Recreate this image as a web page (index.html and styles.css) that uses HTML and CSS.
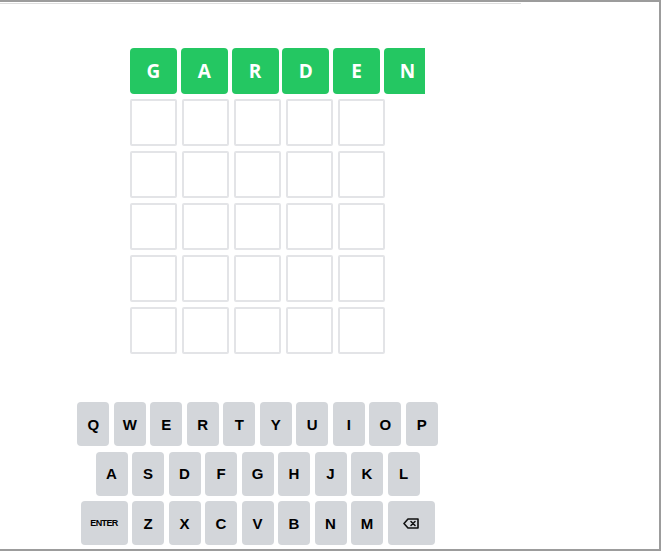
FILE: index.html
```html
<!DOCTYPE html>
<html lang="en">
<head>
<meta charset="utf-8">
<title>Word Game</title>
<link rel="stylesheet" href="styles.css">
</head>
<body>
<div class="frame">
  <div class="progress"></div>
  <main class="app">
    <section class="board">
      <div class="row row-guess">
        <div class="tile tile-correct">G</div>
        <div class="tile tile-correct">A</div>
        <div class="tile tile-correct">R</div>
        <div class="tile tile-correct">D</div>
        <div class="tile tile-correct">E</div>
        <div class="tile tile-correct">N</div>
      </div>
      <div class="row"><div class="tile"></div><div class="tile"></div><div class="tile"></div><div class="tile"></div><div class="tile"></div></div>
      <div class="row"><div class="tile"></div><div class="tile"></div><div class="tile"></div><div class="tile"></div><div class="tile"></div></div>
      <div class="row"><div class="tile"></div><div class="tile"></div><div class="tile"></div><div class="tile"></div><div class="tile"></div></div>
      <div class="row"><div class="tile"></div><div class="tile"></div><div class="tile"></div><div class="tile"></div><div class="tile"></div></div>
      <div class="row"><div class="tile"></div><div class="tile"></div><div class="tile"></div><div class="tile"></div><div class="tile"></div></div>
    </section>
    <section class="keyboard">
      <div class="krow">
        <button class="key">Q</button><button class="key">W</button><button class="key">E</button><button class="key">R</button><button class="key">T</button><button class="key">Y</button><button class="key">U</button><button class="key">I</button><button class="key">O</button><button class="key">P</button>
      </div>
      <div class="krow">
        <button class="key">A</button><button class="key">S</button><button class="key">D</button><button class="key">F</button><button class="key">G</button><button class="key">H</button><button class="key">J</button><button class="key">K</button><button class="key">L</button>
      </div>
      <div class="krow">
        <button class="key key-wide key-enter">ENTER</button><button class="key">Z</button><button class="key">X</button><button class="key">C</button><button class="key">V</button><button class="key">B</button><button class="key">N</button><button class="key">M</button><button class="key key-wide" aria-label="Backspace"><svg class="bs" width="16" height="11" viewBox="0 0 16 11"><path d="M5 1 H15 V10 H5 L1 5.5 Z" fill="none" stroke="#111" stroke-width="1.6" stroke-linejoin="round"/><path d="M8 3.5 L12 7.5 M12 3.5 L8 7.5" stroke="#111" stroke-width="1.6" stroke-linecap="round"/></svg></button>
      </div>
    </section>
  </main>
</div>
</body>
</html>
```

FILE: styles.css
```css
* { box-sizing: border-box; }

html, body {
  margin: 0;
  padding: 0;
  background: #ffffff;
}

.frame {
  width: 661px;
  height: 551px;
  border-top: 2px solid #9c9c9c;
  border-right: 2px solid #9c9c9c;
  border-bottom: 2px solid #9c9c9c;
  overflow: hidden;
  background: #ffffff;
}

.progress {
  width: 521px;
  height: 1px;
  margin-top: 1px;
  background: #dedede;
}

.app {
  width: 515px;
  display: flex;
  flex-direction: column;
  align-items: center;
}

.board {
  width: 255px;
  margin-top: 44px;
  display: flex;
  flex-direction: column;
  gap: 5px;
}

.row {
  display: flex;
  gap: 5px;
  height: 47px;
}

.row-guess {
  width: 295px;
  overflow: hidden;
  gap: 3.8px;
  height: 47px;
  margin-bottom: -1px;
}

.tile {
  flex: 0 0 47px;
  width: 47px;
  height: 47px;
  border: 2px solid #e3e4e7;
  border-radius: 2px;
  display: flex;
  align-items: center;
  justify-content: center;
}

.tile-correct {
  background: #24c762;
  border: none;
  border-radius: 4px;
  color: #ffffff;
  font-family: "Open Sans", "Noto Sans", sans-serif;
  font-weight: 700;
  font-size: 19px;
  height: 46px;
}

.keyboard {
  margin-top: 48px;
  display: flex;
  flex-direction: column;
  gap: 5.5px;
  width: 515px;
}

.krow {
  display: flex;
  justify-content: center;
  gap: 4.5px;
}

.key {
  width: 32px;
  height: 44px;
  padding: 0;
  border: none;
  border-radius: 4px;
  background: #d3d6da;
  color: #000000;
  font-family: "Liberation Sans", Arial, sans-serif;
  font-weight: 700;
  font-size: 15px;
  display: flex;
  align-items: center;
  justify-content: center;
}

.key-wide {
  width: 47px;
}

.key-enter {
  font-size: 9px;
  letter-spacing: -0.6px;
}

.bs {
  display: block;
}
```
